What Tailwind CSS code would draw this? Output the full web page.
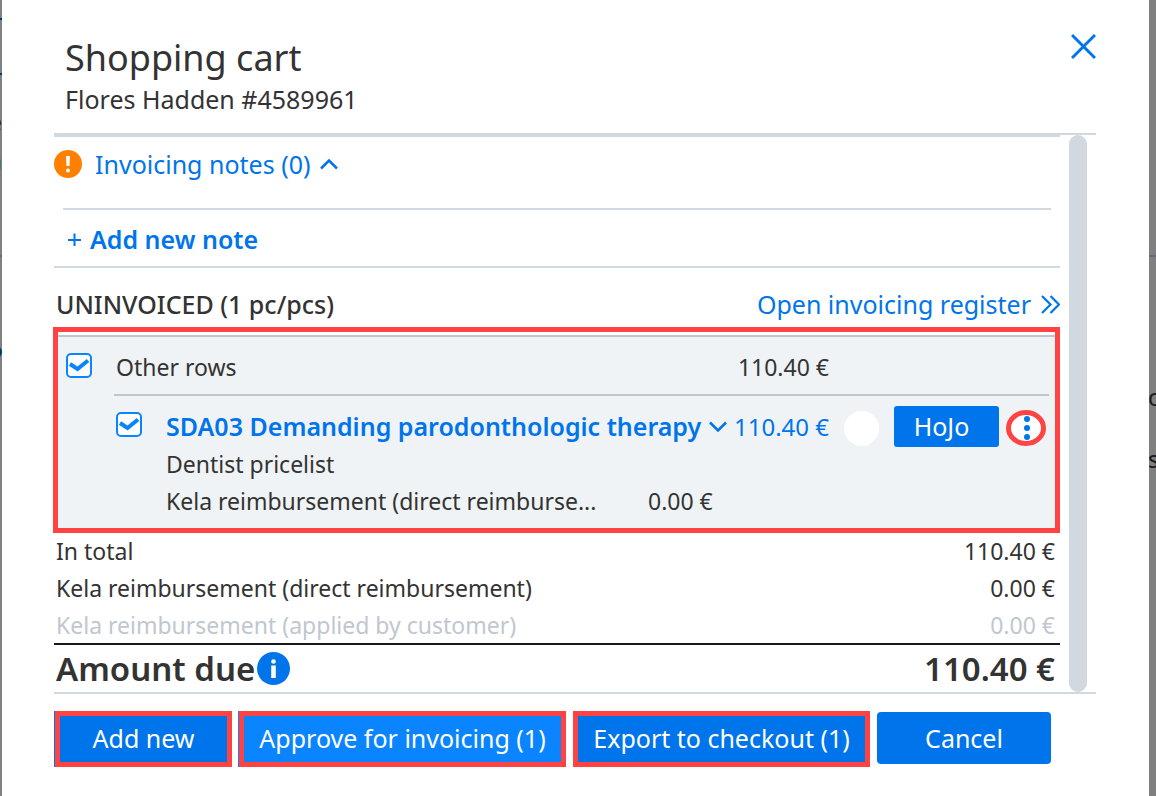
<!DOCTYPE html>
<html lang="en">
<head>
<meta charset="UTF-8">
<meta name="viewport" content="width=device-width, initial-scale=1.0">
<title>Shopping cart</title>
<script src="https://cdn.jsdelivr.net/npm/@tailwindcss/browser@4"></script>
</head>
<body class="min-h-screen flex bg-[#808080] text-[#333] text-[23px] leading-[37px] font-['Noto_Sans',sans-serif]">

<!-- page behind the dialog, left edge -->
<div class="relative w-[2px] shrink-0 overflow-hidden" aria-hidden="true">
    <div class="absolute top-[18px] w-full h-[2px] bg-[#003b76]"></div>
    <div class="absolute top-[73px] w-full h-[2px] bg-[#003b76]"></div>
    <div class="absolute top-[104px] right-0 text-[#1a1a1a]">e</div>
    <div class="absolute top-[143px] right-0 text-[#003b76]">a</div>
    <div class="absolute top-[255px] w-full h-[2px] bg-[#686c70]"></div>
    <div class="absolute top-[346px] right-0 size-3 rounded-full bg-[#003b76]"></div>
</div>

<main class="flex-1 min-w-0 bg-white pl-[52px] pr-[53px]" role="dialog" aria-labelledby="cart-title">
    <header class="flex justify-between items-start h-[133px] pt-[33px] pl-[11px]">
        <div>
            <h1 id="cart-title" class="text-[36px] leading-[49px]">Shopping cart</h1>
            <p class="text-[25px] leading-[34px]">Flores Hadden #4589961</p>
        </div>
        <button aria-label="Close" class="text-[#0075eb]">
            <svg class="w-[25px] h-[27px]" viewBox="0 0 25 27" fill="none" stroke="currentColor" stroke-width="3"><path d="M1 2 24 25M24 2 1 25"/></svg>
        </button>
    </header>

    <div class="flex gap-[9px] pr-[9px] border-y-2 border-[#d1d8df]">
        <div class="flex-1 min-w-0">
            <section class="border-t-2 border-b-2 border-[#d1d8df] text-[25px]">
                <div class="flex items-center h-[71px] pb-[17px]">
                    <svg class="size-7 mr-[13px]" viewBox="0 0 28 28"><circle cx="14" cy="14" r="14" fill="#ff8000"/><path d="M12 6h4l-.5 10h-3z" fill="#fff"/><circle cx="14" cy="20.500" r="2" fill="#fff"/></svg>
                    <button class="flex items-center gap-[10px] text-[#0075eb]">
                        Invoicing notes (0)
                        <svg class="w-[18px] h-[12px]" viewBox="0 0 18 12" fill="none" stroke="currentColor" stroke-width="2.500"><path d="M1 10.500 9 2.500l8 8"/></svg>
                    </button>
                </div>
                <hr class="mx-[9px] border-t-2 border-[#d1d8df]">
                <button class="flex items-center gap-[9px] h-14 pl-[14px] pt-[2px] text-[#0075eb] font-semibold">
                    <svg class="size-[13px]" viewBox="0 0 13 13" stroke="currentColor" stroke-width="2"><path d="M0 7h13M6.500.5v13"/></svg>
                    Add new note
                </button>
            </section>

            <div class="flex justify-between items-center h-[59px] pt-[14px] pl-[2px] text-[25px]">
                <h2 class="font-medium">UNINVOICED (1 pc/pcs)</h2>
                <a href="#" class="flex items-center gap-[10px] text-[#0075eb]">
                    Open invoicing register
                    <svg class="w-[19px] h-[19px]" viewBox="0 0 19 19" fill="none" stroke="currentColor" stroke-width="2.200"><path d="m1 1 8.500 8.500L1 18M9.500 1 18 9.500 9.500 18"/></svg>
                </a>
            </div>

            <section class="-ml-px h-[206px] border-5 border-[#ff4242] pt-[3px]">
                <div class="h-full bg-[#f0f3f6] border-t-2 border-[#bdc5ce] pl-2 pr-[6px]">
                    <div class="flex items-center h-[57px] pb-px">
                        <span class="relative flex mr-6">
                            <input id="all-rows" type="checkbox" checked class="peer appearance-none w-[26px] h-[25px] rounded-[5px] border-2 border-[#0a84ff] bg-white">
                            <svg class="absolute inset-0 w-[26px] h-[25px] pointer-events-none invisible peer-checked:visible" viewBox="0 0 26 25" fill="none" stroke="#0a84ff" stroke-width="4"><path d="m4 11 7.500 5L22 7.500"/></svg>
                        </span>
                        <label for="all-rows" class="flex-1 pt-1">Other rows</label>
                        <span class="pt-1 mr-[220px]">110.40 €</span>
                    </div>
                    <div class="ml-12 border-t-2 border-[#bdc5ce] pt-[10px]">
                        <div class="flex items-center h-[41px] pr-[3px]">
                            <span class="relative flex ml-[2px] mr-6 -mt-1">
                                <input id="row-sda03" type="checkbox" checked aria-label="SDA03" class="peer appearance-none w-[26px] h-[25px] rounded-[5px] border-2 border-[#0a84ff] bg-white">
                                <svg class="absolute inset-0 w-[26px] h-[25px] pointer-events-none invisible peer-checked:visible" viewBox="0 0 26 25" fill="none" stroke="#0a84ff" stroke-width="4"><path d="m4 11 7.500 5L22 7.500"/></svg>
                            </span>
                            <button class="flex-1 min-w-0 flex items-center gap-2 text-[#0075eb] text-[25px] font-semibold whitespace-nowrap">
                                SDA03 Demanding parodonthologic therapy
                                <svg class="w-[18px] h-[12px] shrink-0" viewBox="0 0 18 12" fill="none" stroke="currentColor" stroke-width="2.500"><path d="m1 1.500 8 8 8-8"/></svg>
                            </button>
                            <span class="text-[#0075eb] text-[24px] whitespace-nowrap">110.40 €</span>
                            <span class="shrink-0 size-[35px] ml-[15px] mt-[3px] rounded-full bg-white"></span>
                            <button class="shrink-0 w-[105px] h-[41px] ml-[15px] pr-[10px] rounded-[3px] bg-[#0075eb] text-white text-[25px]">HoJo</button>
                            <button aria-label="More actions" class="shrink-0 ml-[7px] mt-[3px]">
                                <svg class="w-[40px] h-[36px]" viewBox="0 0 40 36"><ellipse cx="20" cy="18" rx="17.500" ry="15.500" fill="#fff" stroke="#ff4242" stroke-width="5"/><g fill="#0075eb"><circle cx="21" cy="9" r="3"/><circle cx="21" cy="18" r="3"/><circle cx="21" cy="27" r="3"/></g></svg>
                            </button>
                        </div>
                        <div class="-mt-px pl-[52px]">
                            <p>Dentist pricelist</p>
                            <div class="flex">
                                <p class="w-[482px] truncate">Kela reimbursement (direct reimburse...</p>
                                <span>0.00 €</span>
                            </div>
                        </div>
                    </div>
                </div>
            </section>

            <table class="w-full">
                <tbody>
                    <tr><th scope="row" class="pl-[2px] text-left font-normal">In total</th><td class="pr-[5px] text-right">110.40 €</td></tr>
                    <tr><th scope="row" class="pl-[2px] text-left font-normal">Kela reimbursement (direct reimbursement)</th><td class="pr-[5px] text-right">0.00 €</td></tr>
                    <tr class="text-[#c0c7cf]"><th scope="row" class="pl-[2px] text-left font-normal">Kela reimbursement (applied by customer)</th><td class="pr-[5px] text-right">0.00 €</td></tr>
                </tbody>
            </table>
            <div class="flex items-center h-[49px] -mt-px border-t-2 border-[#1a1a1a] pl-[2px] pr-[5px] text-[33px] font-semibold">
                <span>Amount due</span>
                <button aria-label="About the amount due" class="ml-[2px]">
                    <svg class="size-[33px]" viewBox="0 0 33 33"><circle cx="16.500" cy="16.500" r="16.500" fill="#0075eb"/><circle cx="16.500" cy="9.500" r="2.300" fill="#fff"/><path d="M14.200 13.500h4.600V26h-4.600z" fill="#fff"/></svg>
                </button>
                <span class="ml-auto">110.40 €</span>
            </div>
        </div>
        <div class="w-[18px] rounded-full bg-[#d1d8df]"></div>
    </div>

    <footer class="flex gap-[7px] pt-[17px] pr-[45px] text-white text-[25px] leading-[34px] whitespace-nowrap">
        <button class="w-[177px] h-14 ml-px pb-[2px] border-5 border-[#ff4242] bg-[#0075eb] shadow-[-1px_0_0_#0075eb]">Add new</button>
        <button class="w-[327px] h-14 pb-[2px] border-5 border-[#ff4242] bg-[#0a84ff] shadow-[-1px_0_0_#0a84ff]">Approve for invoicing (1)</button>
        <button class="w-[297px] h-14 pb-[2px] border-5 border-[#ff4242] bg-[#0075eb]">Export to checkout (1)</button>
        <button class="flex-1 h-[52px] mt-px rounded-[4px] bg-[#0075eb]">Cancel</button>
    </footer>
</main>

<!-- page behind the dialog, right edge -->
<div class="relative w-[7px] shrink-0 overflow-hidden" aria-hidden="true">
    <div class="absolute top-[255px] w-full h-[2px] bg-[#686c70]"></div>
    <div class="absolute top-[379px] -left-px text-[#1a1a1a]">c</div>
    <div class="absolute top-[441px] -left-px text-[#1a1a1a]">s</div>
</div>

</body>
</html>
